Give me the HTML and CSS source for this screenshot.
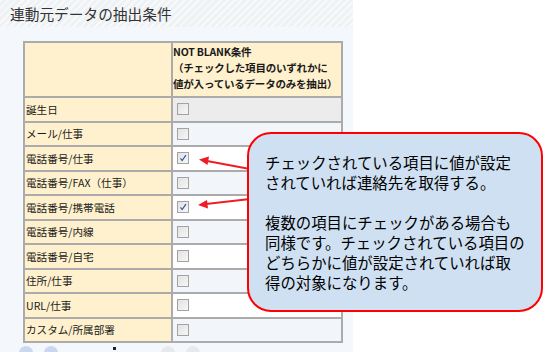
FILE: index.html
```html
<!DOCTYPE html>
<html lang="ja">
<head>
    <meta charset="UTF-8">
    <title>連動元データの抽出条件</title>
    <link rel="stylesheet" href="styles.css">
</head>
<body>
<div class="panel">
    <div class="panel-title">連動元データの抽出条件</div>
    <table class="cond-table">
        <tr class="head-row">
            <th class="label-col"></th>
            <th class="check-col">NOT BLANK条件<br>（チェックした項目のいずれかに<br>値が入っているデータのみを抽出）</th>
        </tr>
        <tr class="row-hover">
            <td class="label-col">誕生日</td>
            <td class="check-col"><span class="cb"></span></td>
        </tr>
        <tr class="row-odd">
            <td class="label-col">メール/仕事</td>
            <td class="check-col"><span class="cb"></span></td>
        </tr>
        <tr class="row-even">
            <td class="label-col">電話番号/仕事</td>
            <td class="check-col"><span class="cb checked"><svg viewBox="0 0 12 12"><path d="M3 6.5 L5 9 L9.5 2.5"/></svg></span></td>
        </tr>
        <tr class="row-odd">
            <td class="label-col">電話番号/FAX（仕事）</td>
            <td class="check-col"><span class="cb"></span></td>
        </tr>
        <tr class="row-even">
            <td class="label-col">電話番号/携帯電話</td>
            <td class="check-col"><span class="cb checked"><svg viewBox="0 0 12 12"><path d="M3 6.5 L5 9 L9.5 2.5"/></svg></span></td>
        </tr>
        <tr class="row-odd">
            <td class="label-col">電話番号/内線</td>
            <td class="check-col"><span class="cb"></span></td>
        </tr>
        <tr class="row-even">
            <td class="label-col">電話番号/自宅</td>
            <td class="check-col"><span class="cb"></span></td>
        </tr>
        <tr class="row-odd">
            <td class="label-col">住所/仕事</td>
            <td class="check-col"><span class="cb"></span></td>
        </tr>
        <tr class="row-even">
            <td class="label-col">URL/仕事</td>
            <td class="check-col"><span class="cb"></span></td>
        </tr>
        <tr class="row-odd">
            <td class="label-col">カスタム/所属部署</td>
            <td class="check-col"><span class="cb"></span></td>
        </tr>
    </table>
    <div class="pager">
        <span class="pg-btn on"></span>
        <span class="pg-btn on"></span>
        <span class="pg-num"></span>
        <span class="pg-btn off"></span>
        <span class="pg-btn off"></span>
    </div>
</div>

<!-- note overlay -->
<svg class="arrows" width="547" height="352" viewBox="0 0 547 352">
    <line x1="250" y1="169" x2="207" y2="161"/>
    <polygon points="199,159.5 209,156.5 207.5,165"/>
    <line x1="250" y1="199" x2="206" y2="204"/>
    <polygon points="198,205 207,200 208,208.5"/>
</svg>
<div class="note">
    チェックされている項目に値が設定<br>
    されていれば連絡先を取得する。<br>
    <br>
    複数の項目にチェックがある場合も<br>
    同様です。チェックされている項目の<br>
    どちらかに値が設定されていれば取<br>
    得の対象になります。
</div>
</body>
</html>
```

FILE: styles.css
```css
body {
    margin: 0;
    padding: 0;
    background: #ffffff;
    font-family: "Noto Sans CJK JP", "Noto Sans", sans-serif;
    width: 547px;
    height: 352px;
    overflow: hidden;
    position: relative;
}
.panel {
    width: 353px;
    height: 352px;
    background-color: #f4f8fd;
    overflow: hidden;
}
.panel-title {
    height: 27px;
    line-height: 28px;
    padding-left: 10px;
    font-size: 14.7px;
    color: #333;
    background-color: #eef2f5;
    background-image: repeating-linear-gradient(135deg, rgba(255,255,255,0.5) 0, rgba(255,255,255,0.5) 2px, transparent 2px, transparent 5px);
}
.cond-table {
    border-collapse: collapse;
    margin: 14px 0 0 23px;
    width: 320px;
    table-layout: fixed;
}
.cond-table th,
.cond-table td {
    border: 2px solid #ababab;
    padding: 0;
    font-size: 10.6px;
    color: #1a1a1a;
    text-align: left;
}
.label-col {
    width: 146px;
    background-color: #fff1cd;
}
.cond-table td.label-col {
    padding-left: 1px;
}
.head-row th {
    height: 52px;
    vertical-align: top;
    background-color: #fff1cd;
}
.head-row th.check-col {
    font-size: 10.5px;
    font-weight: bold;
    line-height: 16px;
    padding-top: 1px;
    white-space: nowrap;
    letter-spacing: -0.2px;
}
.cond-table td {
    height: 22.5px;
}
.row-hover td.check-col {
    background-color: #ececec;
}
.row-odd td.check-col {
    background-color: #f2f5fa;
}
.row-even td.check-col {
    background-color: #ffffff;
}
td.check-col {
    padding-left: 4px;
}
.cb {
    display: block;
    width: 10px;
    height: 10px;
    border: 1px solid #a3a3a3;
    background: linear-gradient(135deg, #e2e2e2 0%, #f7f7f7 100%);
}
.cb svg {
    display: block;
    width: 10px;
    height: 10px;
}
.cb path {
    fill: none;
    stroke: #3a50a8;
    stroke-width: 1.4;
}
.pager {
    display: flex;
    align-items: center;
    margin: 3px 0 0 19px;
    gap: 11px;
}
.pg-btn {
    width: 14px;
    height: 14px;
    border-radius: 50%;
}
.pg-btn.on {
    background-color: #c9d8ee;
}
.pg-btn.off {
    background-color: #e6e9ee;
}
.pg-num {
    width: 3px;
    height: 3px;
    margin: 0 34px 10px 44px;
    background-color: #222;
}
.arrows {
    position: absolute;
    left: 0;
    top: 0;
}
.arrows line {
    stroke: #ee1c24;
    stroke-width: 2;
}
.arrows polygon {
    fill: #ee1c24;
}
.note {
    position: absolute;
    left: 247px;
    top: 132px;
    width: 276px;
    height: 158px;
    padding: 18px 0 0 16px;
    border: 2px solid #ff0000;
    border-radius: 24px;
    background-color: #cfe0f2;
    color: #000;
    font-size: 15.4px;
    line-height: 20px;
    white-space: nowrap;
}
```
